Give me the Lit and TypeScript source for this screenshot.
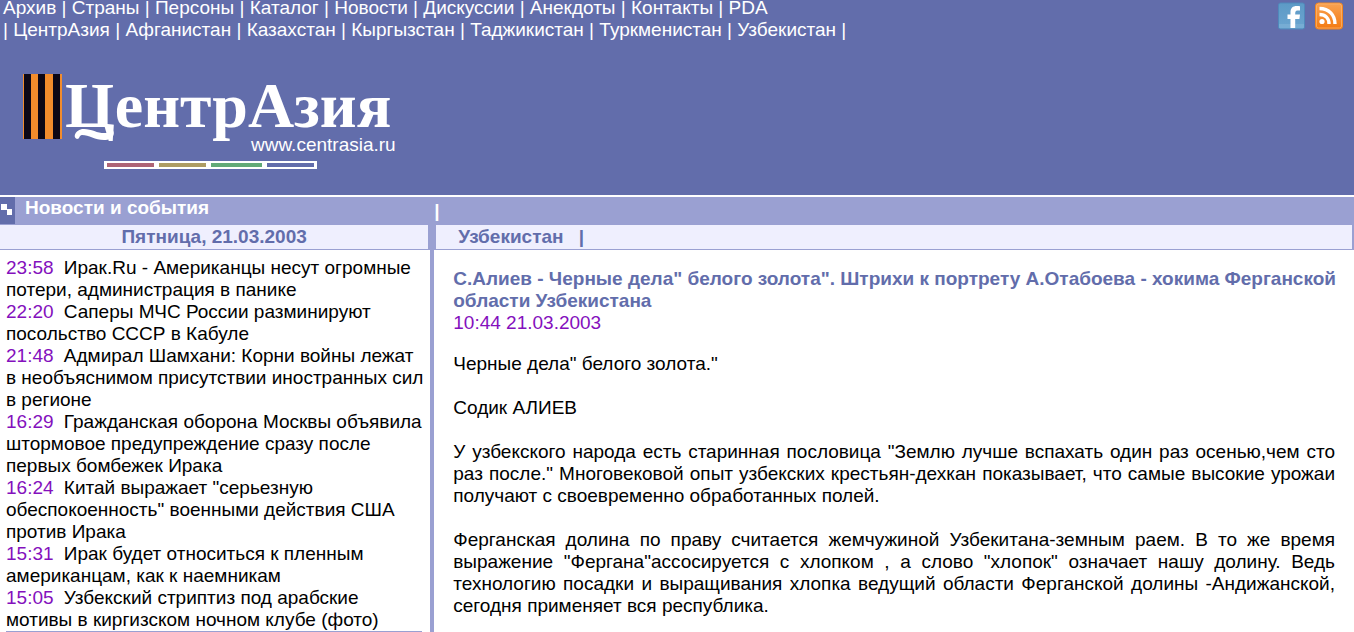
import { LitElement, html, css } from "lit";
import { customElement } from "lit/decorators.js";

interface NewsItem {
  time: string;
  title: string;
}

const SECTIONS = ["Архив", "Страны", "Персоны", "Каталог", "Новости", "Дискуссии", "Анекдоты", "Контакты", "PDA"];
const COUNTRIES = ["ЦентрАзия", "Афганистан", "Казахстан", "Кыргызстан", "Таджикистан", "Туркменистан", "Узбекистан"];

const NEWS: NewsItem[] = [
  { time: "23:58", title: "Ирак.Ru - Американцы несут огромные потери, администрация в панике" },
  { time: "22:20", title: "Саперы МЧС России разминируют посольство СССР в Кабуле" },
  { time: "21:48", title: "Адмирал Шамхани: Корни войны лежат в необъяснимом присутствии иностранных сил в регионе" },
  { time: "16:29", title: "Гражданская оборона Москвы объявила штормовое предупреждение сразу после первых бомбежек Ирака" },
  { time: "16:24", title: "Китай выражает \"серьезную обеспокоенность\" военными действия США против Ирака" },
  { time: "15:31", title: "Ирак будет относиться к пленным американцам, как к наемникам" },
  { time: "15:05", title: "Узбекский стриптиз под арабские мотивы в киргизском ночном клубе (фото)" },
];

const PARAGRAPHS = [
  "Черные дела\" белого золота.\"",
  "Содик АЛИЕВ",
  "У узбекского народа есть старинная пословица \"Землю лучше вспахать один раз осенью,чем сто раз после.\" Многовековой опыт узбекских крестьян-дехкан показывает, что самые высокие урожаи получают с своевременно обработанных полей.",
  "Ферганская долина по праву считается жемчужиной Узбекитана-земным раем. В то же время выражение \"Фергана\"ассосируется с хлопком , а слово \"хлопок\" означает нашу долину. Ведь технологию посадки и выращивания хлопка ведущий области Ферганской долины -Андижанской, сегодня применяет вся республика.",
];

@customElement("app-root")
export class AppRoot extends LitElement {
  static styles = css`
    :host {
      display: flex;
      flex-direction: column;
      height: 100vh;
      overflow: hidden;
      background: #fff;
      color: #000;
      font: 19px/22px "Liberation Sans", Arial, sans-serif;
      --indigo: #626dab;
      --lilac: #9aa0d2;
      --pale: #efeffe;
    }
    a { color: inherit; text-decoration: none; }
    a:hover { text-decoration: underline; }
    h1, h2, p, ul { margin: 0; padding: 0; font-size: inherit; }
    svg { display: block; }
    .header {
      flex: none;
      background: var(--indigo);
      color: #fff;
      border-bottom: 2px solid #fff;
      padding-bottom: 24px;
    }
    .top { display: flex; justify-content: space-between; padding: 0 10px 0 3px; }
    .menus { margin-top: -3px; }
    .social { display: flex; gap: 9px; padding-top: 2px; }
    .logo { display: block; width: 380px; margin: 32px 0 0 22px; }
    .bar,
    .columns { display: grid; grid-template-columns: calc(32% + 1px) 1fr; }
    .bar {
      flex: none;
      height: 28px;
      background: var(--lilac);
      color: #fff;
      font-weight: bold;
    }
    .bar-title { display: flex; gap: 10px; }
    .tick { width: 15px; height: 27px; background: var(--indigo); }
    .bar-sep { padding-top: 3px; }
    .columns { flex: 1; min-height: 0; }
    .side { border-right: 4px solid var(--lilac); }
    .strip {
      background: var(--pale);
      border-bottom: 1px solid var(--lilac);
      color: var(--indigo);
      font-weight: bold;
      height: 24px;
      line-height: 24px;
    }
    .side .strip { border-right: 2px solid var(--lilac); text-align: center; }
    .main .strip { border-left: 2px solid var(--lilac); border-right: 2px solid var(--lilac); padding-left: 22px; }
    .country { margin-right: 10px; }
    .news { list-style: none; margin: 7px 2px 0 6px; }
    .rule { margin: 0 8px 0 6px; border: 0; border-top: 1px solid var(--lilac); }
    .time { color: #8410bd; }
    .news .time { margin-right: 5px; }
    .article { padding: 18px 8px 0 19px; }
    .headline { color: var(--indigo); font-weight: bold; }
    .text { margin: 22px 11px 0 0; text-align: justify; }
    .time + .text { margin-top: 19px; }
    .stamp { display: block; }
  `;

  private logo() {
    return html`
      <svg width="380" height="98" viewBox="0 0 380 98" role="img" aria-label="ЦентрАзия">
        <rect x="1" y="1" width="39" height="65" fill="#f28c2c" />
        <path d="M2 1h7v65H2zM16 1h7v65h-7zM31 1h7v65h-7z" fill="#0c0715" />
        <g fill="#fff">
          <text x="43" y="54" font-family="Liberation Serif, Times New Roman, serif" font-weight="bold" font-size="64">ЦентрАзия</text>
          <path d="M88 54C95 59 92 67 82 67C73 67 67 62 60 62C57 62 58 66 55 66C51 65 52 58 60 56C69 55 76 61 84 60C88 60 89 57 86 54Z" />
          <text x="229" y="78" font-family="Liberation Sans, Arial, sans-serif" font-size="19">www.centrasia.ru</text>
        </g>
        <path d="M82 88h213v8H82z" fill="#fff" />
        <path d="M85 90h47v4H85z" fill="#ae6475" />
        <path d="M137 90h47v4h-47z" fill="#ad9c63" />
        <path d="M189 90h51v4h-51z" fill="#62aa77" />
        <path d="M245 90h47v4h-47z" fill="#626dab" />
      </svg>`;
  }

  private facebook() {
    return html`
      <svg width="27" height="28" viewBox="0 0 27 28" aria-hidden="true">
        <defs>
          <linearGradient id="fb" x2="0" y2="1"><stop stop-color="#5d9ac6" /><stop offset="1" stop-color="#6ba5d0" /></linearGradient>
        </defs>
        <rect x=".5" y="1" width="26" height="26" rx="2" fill="url(#fb)" stroke="#5089bb" />
        <path d="M1 22h25v4H1z" fill="#8bbbdc" opacity=".4" />
        <path d="M12.500 26V17h-3v-4.500h3V10c0-5 3.500-7 9.500-5.700v4.200h-2.500c-2 0-2.300 1-2.300 4H22l-.6 4.500h-4.200v9z" fill="#fff" />
      </svg>`;
  }

  private rss() {
    return html`
      <svg width="30" height="28" viewBox="0 0 30 28" aria-hidden="true">
        <defs>
          <linearGradient id="rs" x2="0" y2="1"><stop stop-color="#f9a352" /><stop offset="1" stop-color="#f47a10" /></linearGradient>
        </defs>
        <rect x="1.500" y="1" width="27" height="26" rx="3" fill="url(#rs)" stroke="#f0851f" />
        <rect x="2.500" y="2" width="25" height="24" rx="2" fill="none" stroke="#fbb673" opacity=".7" />
        <circle cx="8" cy="19.500" r="2.600" fill="#fff" />
        <path d="M5.500 12.500c6 0 9.500 4 9.500 9.500M5.500 6.500C15 6.500 21 13 21 22" fill="none" stroke="#fff" stroke-width="3.400" />
      </svg>`;
  }

  render() {
    return html`
      <header class="header">
        <div class="top">
          <nav class="menus">
            <div>${SECTIONS.map((s, i) => html`${i ? " | " : ""}<a href="#">${s}</a>`)}</div>
            <div>| ${COUNTRIES.map((c) => html`<a href="#">${c}</a> | `)}</div>
          </nav>
          <div class="social">
            <a href="#" aria-label="Facebook">${this.facebook()}</a>
            <a href="#" aria-label="RSS">${this.rss()}</a>
          </div>
        </div>
        <a class="logo" href="#">${this.logo()}</a>
      </header>
      <div class="bar">
        <div class="bar-title">
          <svg class="tick" viewBox="0 0 15 27" aria-hidden="true">
            <path d="M1 7h6v6H1zM7 12h5v6H7z" fill="#fff" />
          </svg>
          <h2>Новости и события</h2>
        </div>
        <div class="bar-sep">|</div>
      </div>
      <div class="columns">
        <aside class="side">
          <div class="strip">Пятница, 21.03.2003</div>
          <ul class="news">
            ${NEWS.map((n) => html`<li><span class="time">${n.time}</span> <a href="#">${n.title}</a></li>`)}
          </ul>
          <hr class="rule" />
        </aside>
        <main class="main">
          <div class="strip"><a class="country" href="#">Узбекистан</a> |</div>
          <article class="article">
            <h1 class="headline">С.Алиев - Черные дела" белого золота". Штрихи к портрету А.Отабоева - хокима Ферганской области Узбекистана</h1>
            <time class="time stamp" datetime="2003-03-21T10:44">10:44 21.03.2003</time>
            ${PARAGRAPHS.map((p) => html`<p class="text">${p}</p>`)}
          </article>
        </main>
      </div>
    `;
  }
}
